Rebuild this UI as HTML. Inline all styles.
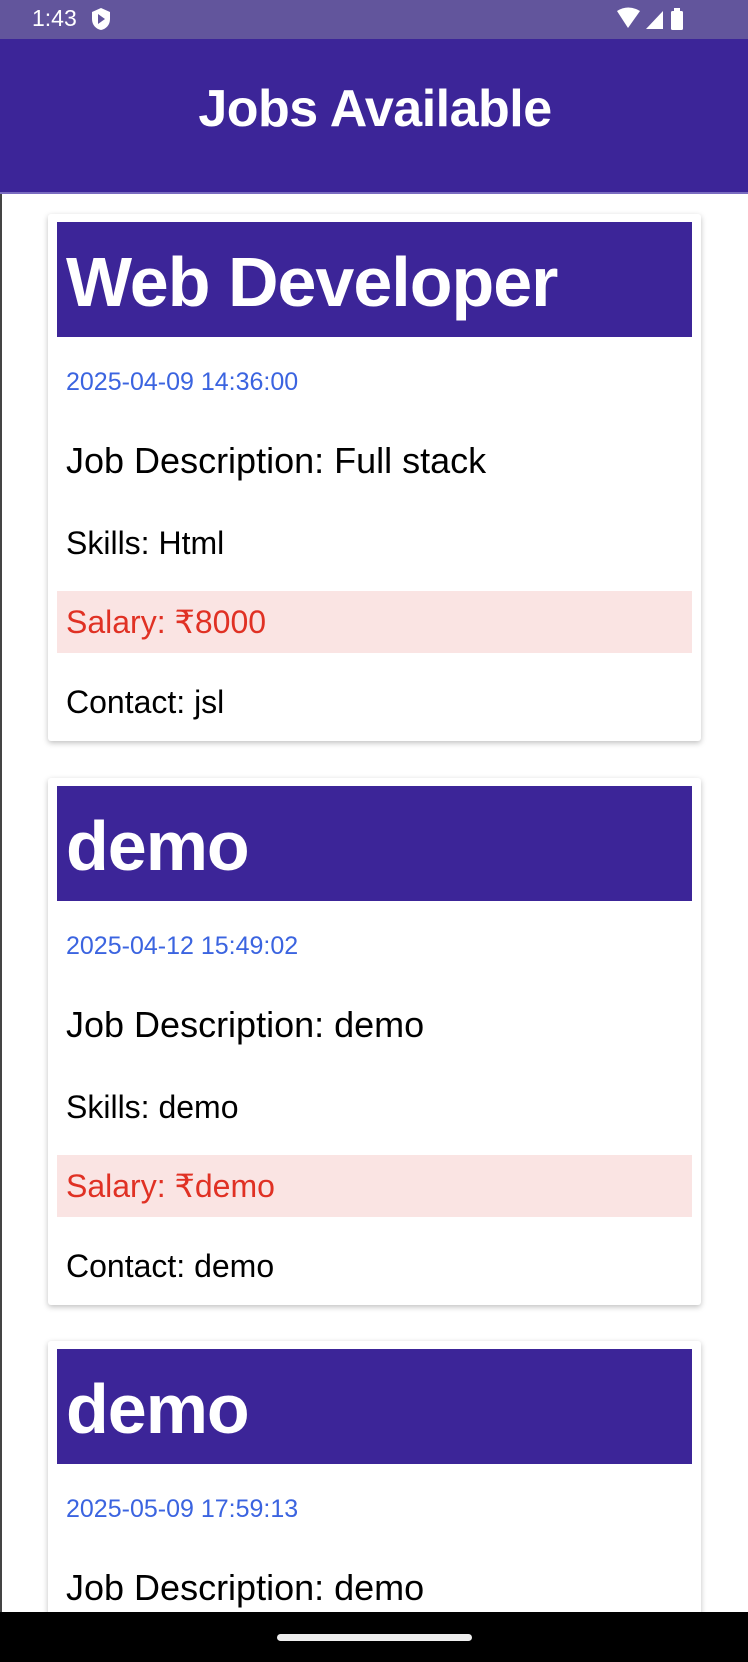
<!DOCTYPE html>
<html style="overflow:hidden;height:1662px"><head><meta charset="utf-8"><style>
*{margin:0;padding:0;box-sizing:border-box}
body{width:748px;height:1662px;overflow:hidden;background:#fff;font-family:"Liberation Sans",sans-serif;position:relative;border-left:2px solid #444}
.status{position:absolute;left:-2px;top:0;width:750px;height:39px;background:#62559c;color:#fff}
.header{position:absolute;left:-2px;top:39px;width:750px;height:155px;background:#3c2598;color:#fff;text-align:center;font-weight:bold;font-size:52px;line-height:140px;border-bottom:2px solid #7a6cc0;letter-spacing:-0.5px}
.card{position:absolute;left:46px;width:653px;height:527px;background:#fff;box-shadow:0 2px 6px rgba(0,0,0,.25);border-radius:3px;overflow:hidden}
.title{position:absolute;left:9px;top:8px;width:635px;height:115px;background:#3c2598;color:#fff;font-weight:bold;font-size:70px;line-height:120px;padding-left:9px;letter-spacing:-1px}
.t{position:absolute;left:18px;white-space:nowrap}
.date{top:154px;font-size:25px;color:#3b64e0}
.desc{top:226px;font-size:36px;color:#000}
.skills{top:311px;font-size:32px;color:#000}
.sal{position:absolute;left:9px;top:377px;width:635px;height:62px;background:#fae4e3;color:#e03124;font-size:32px;line-height:62px;padding-left:9px}
.contact{top:470px;font-size:32px;color:#000}
.nav{position:absolute;left:-2px;top:1612px;width:750px;height:50px;background:#000}
.pill{position:absolute;left:277px;top:22px;width:195px;height:7px;border-radius:4px;background:#eee}
</style></head><body>
<div class="status">
<span style="position:absolute;left:32px;top:5px;font-size:23px">1:43</span>
<svg style="position:absolute;left:90px;top:7px" width="22" height="24" viewBox="0 0 22 24"><path d="M11 1L2 5v7c0 6 4 10 9 11 5-1 9-5 9-11V5z" fill="#fff"/><path d="M8 7v10l7-5z" fill="#62559c"/></svg>
<svg style="position:absolute;left:616px;top:7px" width="80" height="24" viewBox="0 0 80 24"><path d="M1 4Q12-3 24 4L12 21z" fill="#fff"/><path d="M30 22L47 4V22z" fill="#fff"/><rect x="55" y="4" width="12" height="19" rx="1.5" fill="#fff"/><rect x="58" y="1" width="6" height="4" fill="#fff"/></svg>
</div>
<div class="header">Jobs Available</div>

<div class="card" style="top:214px">
<div class="title">Web Developer</div>
<div class="t date">2025-04-09 14:36:00</div>
<div class="t desc">Job Description: Full stack</div>
<div class="t skills">Skills: Html</div>
<div class="sal">Salary: ₹8000</div>
<div class="t contact">Contact: jsl</div>
</div>

<div class="card" style="top:778px">
<div class="title">demo</div>
<div class="t date">2025-04-12 15:49:02</div>
<div class="t desc">Job Description: demo</div>
<div class="t skills">Skills: demo</div>
<div class="sal">Salary: ₹demo</div>
<div class="t contact">Contact: demo</div>
</div>

<div class="card" style="top:1341px;height:280px">
<div class="title">demo</div>
<div class="t date">2025-05-09 17:59:13</div>
<div class="t desc">Job Description: demo</div>
</div>

<div class="nav"><div class="pill"></div></div>
</body></html>
